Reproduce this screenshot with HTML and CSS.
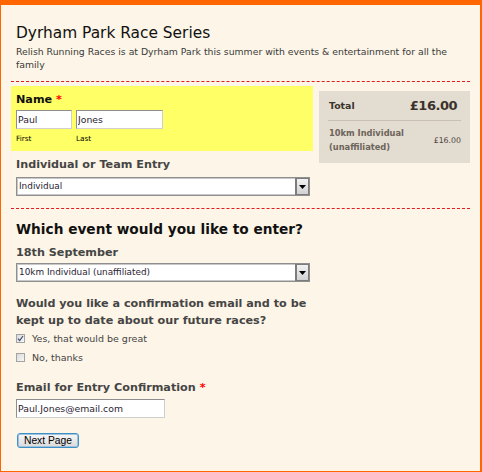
FILE: index.html
```html
<!DOCTYPE html>
<html lang="en">
<head>
<meta charset="utf-8">
<title>Dyrham Park Race Series</title>
<link rel="stylesheet" href="styles.css">
</head>
<body>
<div class="page">
  <header class="intro">
    <h1 class="title">Dyrham Park Race Series</h1>
    <p class="lead">Relish Running Races is at Dyrham Park this summer with events &amp; entertainment for all the family</p>
  </header>

  <section class="step step-one">
    <div class="col">
      <div class="name-box">
        <div class="label label-dark">Name <span class="req">*</span></div>
        <div class="name-fields">
          <div class="name-part">
            <input class="text-input first" type="text" value="Paul">
            <span class="sub">First</span>
          </div>
          <div class="name-part">
            <input class="text-input last" type="text" value="Jones">
            <span class="sub">Last</span>
          </div>
        </div>
      </div>
      <div class="field field-entry">
        <div class="label">Individual or Team Entry</div>
        <div class="select select-entry">
          <span class="select-value">Individual</span>
          <span class="select-btn"><svg width="7" height="4" viewBox="0 0 7 4"><path d="M0 0H7L3.5 4Z" fill="#000"/></svg></span>
        </div>
      </div>
    </div>
    <aside class="summary">
      <div class="summary-total">
        <span class="total-label">Total</span>
        <span class="total-amount">£16.00</span>
      </div>
      <div class="summary-item">
        <span class="item-name">10km Individual (unaffiliated)</span>
        <span class="item-price">£16.00</span>
      </div>
    </aside>
  </section>

  <section class="step step-two">
    <h2 class="heading">Which event would you like to enter?</h2>
    <div class="field field-date">
      <div class="label">18th September</div>
      <div class="select select-event">
        <span class="select-value">10km Individual (unaffiliated)</span>
        <span class="select-btn"><svg width="7" height="4" viewBox="0 0 7 4"><path d="M0 0H7L3.5 4Z" fill="#000"/></svg></span>
      </div>
    </div>
    <div class="field field-question">
      <div class="label label-tall">Would you like a confirmation email and to be kept up to date about our future races?</div>
      <div class="option">
        <span class="check"><svg width="7" height="7" viewBox="0 0 7 7"><path d="M1 3.6L2.7 5.6L6 1" fill="none" stroke="#3a4470" stroke-width="1.1"/></svg></span>
        <span>Yes, that would be great</span>
      </div>
      <div class="option">
        <span class="check"></span>
        <span>No, thanks</span>
      </div>
    </div>
    <div class="field field-email">
      <div class="label">Email for Entry Confirmation <span class="req">*</span></div>
      <input class="text-input email" type="text" value="Paul.Jones@email.com">
    </div>
    <button class="next" type="button">Next Page</button>
  </section>
</div>
</body>
</html>
```

FILE: styles.css
```css
* {
  box-sizing: border-box;
}

body {
  margin: 0;
  background: #fdf5e7;
  font-family: "DejaVu Sans", sans-serif;
}

.page {
  width: 482px;
  height: 472px;
  border-style: solid;
  border-color: #ff6600;
  border-width: 5px 2px 1px 1px;
  background: #fdf5e7;
}

.intro {
  margin: 0 10px;
  padding: 19px 5px 10px;
  border-bottom: 1px dashed #e01b1b;
}

.title {
  margin: 0;
  font-size: 15.4px;
  line-height: 18px;
  font-weight: normal;
  color: #111;
}

.lead {
  margin: 3px 0 0;
  font-size: 9.3px;
  line-height: 13px;
  color: #3a3a3a;
}

.step {
  margin: 0 10px;
}

.step-one {
  display: grid;
  grid-template-columns: 302px 151px;
  column-gap: 6px;
  align-items: start;
  padding: 4px 0 12px;
  border-bottom: 1px dashed #e01b1b;
}

.name-box {
  background: #ffff66;
  padding: 7px 5px 8px;
}

.label {
  font-weight: bold;
  font-size: 11.2px;
  line-height: 14px;
  color: #454545;
}

.label-dark {
  color: #111;
}

.label-tall {
  line-height: 17px;
}

.req {
  color: #f00;
}

.name-fields {
  display: flex;
  gap: 4px;
  margin-top: 3px;
}

.name-part {
  display: flex;
  flex-direction: column;
}

.text-input {
  display: block;
  height: 19px;
  margin: 0;
  padding: 0 1px;
  border: 1px solid;
  border-color: #8e8e8e #cfcfcf #cfcfcf #8e8e8e;
  background: #fff;
  font-family: "DejaVu Sans", sans-serif;
  font-size: 9.3px;
  color: #2a2233;
  outline: none;
}

.first {
  width: 56px;
}

.last {
  width: 87px;
}

.email {
  width: 149px;
  margin-top: 4px;
}

.sub {
  margin-top: 5px;
  font-size: 7.3px;
  line-height: 9px;
  color: #000;
}

.field {
  padding-left: 5px;
}

.field-entry {
  margin-top: 7px;
}

.select {
  display: flex;
  width: 294px;
  height: 19px;
  border: 1px solid #8f8f8f;
  box-shadow: inset 0 0 0 1px #c8c8c8;
  background: #fff;
}

.select-entry {
  margin-top: 5px;
}

.select-event {
  margin-top: 3px;
}

.select-value {
  flex: 1;
  padding-left: 2px;
  font-size: 8.9px;
  line-height: 17px;
  color: #2a2233;
}

.select-btn {
  display: flex;
  align-items: center;
  justify-content: center;
  width: 14px;
  border: 1px solid #7c7c7c;
  border-left-width: 2px;
  background: linear-gradient(#f2f2f2, #d2d2d2);
}

.summary {
  margin-top: 5px;
  padding: 0 9px 9px;
  background: #e3dcd0;
}

.summary-total {
  display: flex;
  justify-content: space-between;
  align-items: center;
  padding: 4px 0 3px;
  line-height: 22px;
  border-bottom: 1px solid #c9c0b3;
}

.total-label {
  padding-left: 1px;
  font-weight: bold;
  font-size: 9.4px;
  color: #3b322b;
}

.total-amount {
  padding-right: 4px;
  font-weight: bold;
  font-size: 13px;
  letter-spacing: -0.5px;
  color: #3b322b;
}

.summary-item {
  display: flex;
  justify-content: space-between;
  align-items: center;
  padding-top: 6px;
}

.item-name {
  width: 95px;
  padding-left: 1px;
  font-weight: bold;
  font-size: 8.3px;
  line-height: 13.5px;
  color: #6d645b;
}

.item-price {
  font-size: 7.8px;
  color: #4b433c;
}

.step-two {
  padding: 12px 0 0 5px;
}

.step-two .field {
  padding-left: 0;
}

.heading {
  margin: 0;
  font-size: 13.7px;
  line-height: 17px;
  font-weight: bold;
  color: #111;
}

.field-date {
  margin-top: 8px;
}

.field-question {
  margin-top: 13px;
  width: 297px;
}

.option {
  display: flex;
  align-items: center;
  gap: 7px;
  height: 19px;
  font-size: 9.5px;
  color: #444;
}

.check {
  display: flex;
  align-items: center;
  justify-content: center;
  width: 9px;
  height: 9px;
  border: 1px solid #a3a3a3;
  background: linear-gradient(135deg, #dadada, #f7f7f7);
}

.field-email {
  margin-top: 14px;
}

.next {
  display: block;
  margin: 15px 0 0 1px;
  width: 62px;
  height: 15px;
  padding: 0;
  border: 1px solid #3d8fc6;
  border-radius: 3px;
  background: linear-gradient(#f8f8f8, #dadada);
  box-shadow: inset 0 0 0 1px #9fc4de;
  font-family: "Liberation Sans", sans-serif;
  font-size: 10.3px;
  line-height: 13px;
  color: #000;
}
```
